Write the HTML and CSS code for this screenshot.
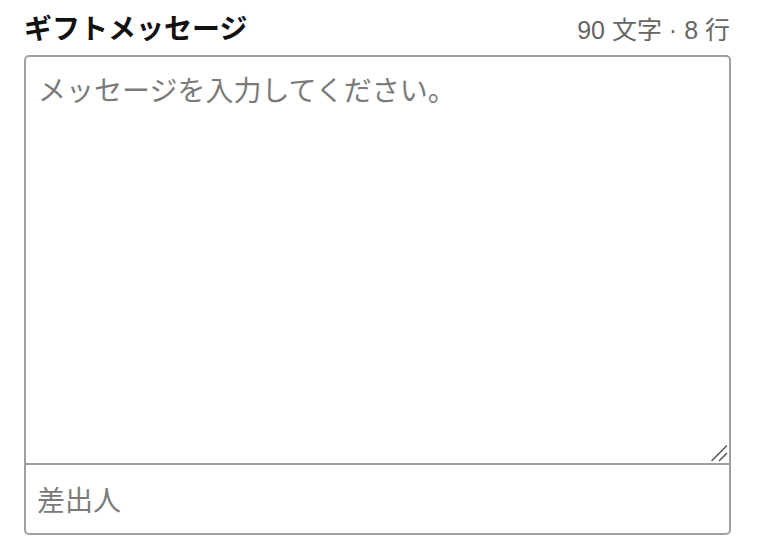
FILE: index.html
```html
<!DOCTYPE html>
<html lang="ja">
<head>
<meta charset="utf-8">
<title>ギフトメッセージ</title>
<link rel="stylesheet" href="styles.css">
</head>
<body>
<div class="field">
  <div class="field-head">
    <label class="field-title" for="msg">ギフトメッセージ</label>
    <span class="field-count">90 文字 · 8 行</span>
  </div>
  <div class="box">
    <div class="message-wrap">
      <textarea id="msg" class="message" placeholder="メッセージを入力してください。"></textarea>
      <svg class="grip" width="18" height="18" viewBox="0 0 18 18" aria-hidden="true">
        <line x1="2" y1="16.5" x2="16.5" y2="2" stroke="#5a5a5a" stroke-width="1.6" stroke-linecap="round"/>
        <line x1="9.5" y1="16.5" x2="16.5" y2="9.5" stroke="#5a5a5a" stroke-width="1.6" stroke-linecap="round"/>
      </svg>
    </div>
    <input class="sender" type="text" placeholder="差出人">
  </div>
</div>
</body>
</html>
```
FILE: styles.css
```css
html, body {
  margin: 0;
  padding: 0;
  background: #ffffff;
}

body {
  font-family: "Noto Sans CJK JP", "Noto Sans", sans-serif;
}

.field {
  width: 707px;
  padding: 7px 0 0 24px;
}

.field-head {
  display: flex;
  justify-content: space-between;
  align-items: baseline;
  height: 40px;
  margin-bottom: 8px;
}

.field-title {
  font-size: 28px;
  line-height: 40px;
  font-weight: 700;
  color: #111111;
}

.field-count {
  font-family: "Liberation Sans", "Noto Sans CJK JP", sans-serif;
  font-size: 25px;
  line-height: 40px;
  color: #666666;
  padding-right: 1px;
}

.box {
  border: 2px solid #a0a0a0;
  border-radius: 5px;
  overflow: hidden;
  display: flex;
  flex-direction: column;
}

.message-wrap {
  position: relative;
  display: flex;
}

.message {
  box-sizing: border-box;
  width: 100%;
  height: 408px;
  margin: 0;
  padding: 11px 12px 12px;
  border: none;
  border-bottom: 2px solid #a0a0a0;
  font-family: "Noto Sans CJK JP", sans-serif;
  font-size: 28px;
  line-height: 42px;
  color: #222222;
  resize: none;
  outline: none;
  background: transparent;
}

.message::placeholder,
.sender::placeholder {
  color: #7a7a7a;
  opacity: 1;
}

.grip {
  position: absolute;
  right: 1px;
  bottom: 3px;
}

.sender {
  box-sizing: border-box;
  width: 100%;
  height: 68px;
  margin: 0;
  padding: 0 12px 0 11px;
  border: none;
  font-family: "Noto Sans CJK JP", sans-serif;
  font-size: 28px;
  color: #222222;
  outline: none;
  background: transparent;
}
```
